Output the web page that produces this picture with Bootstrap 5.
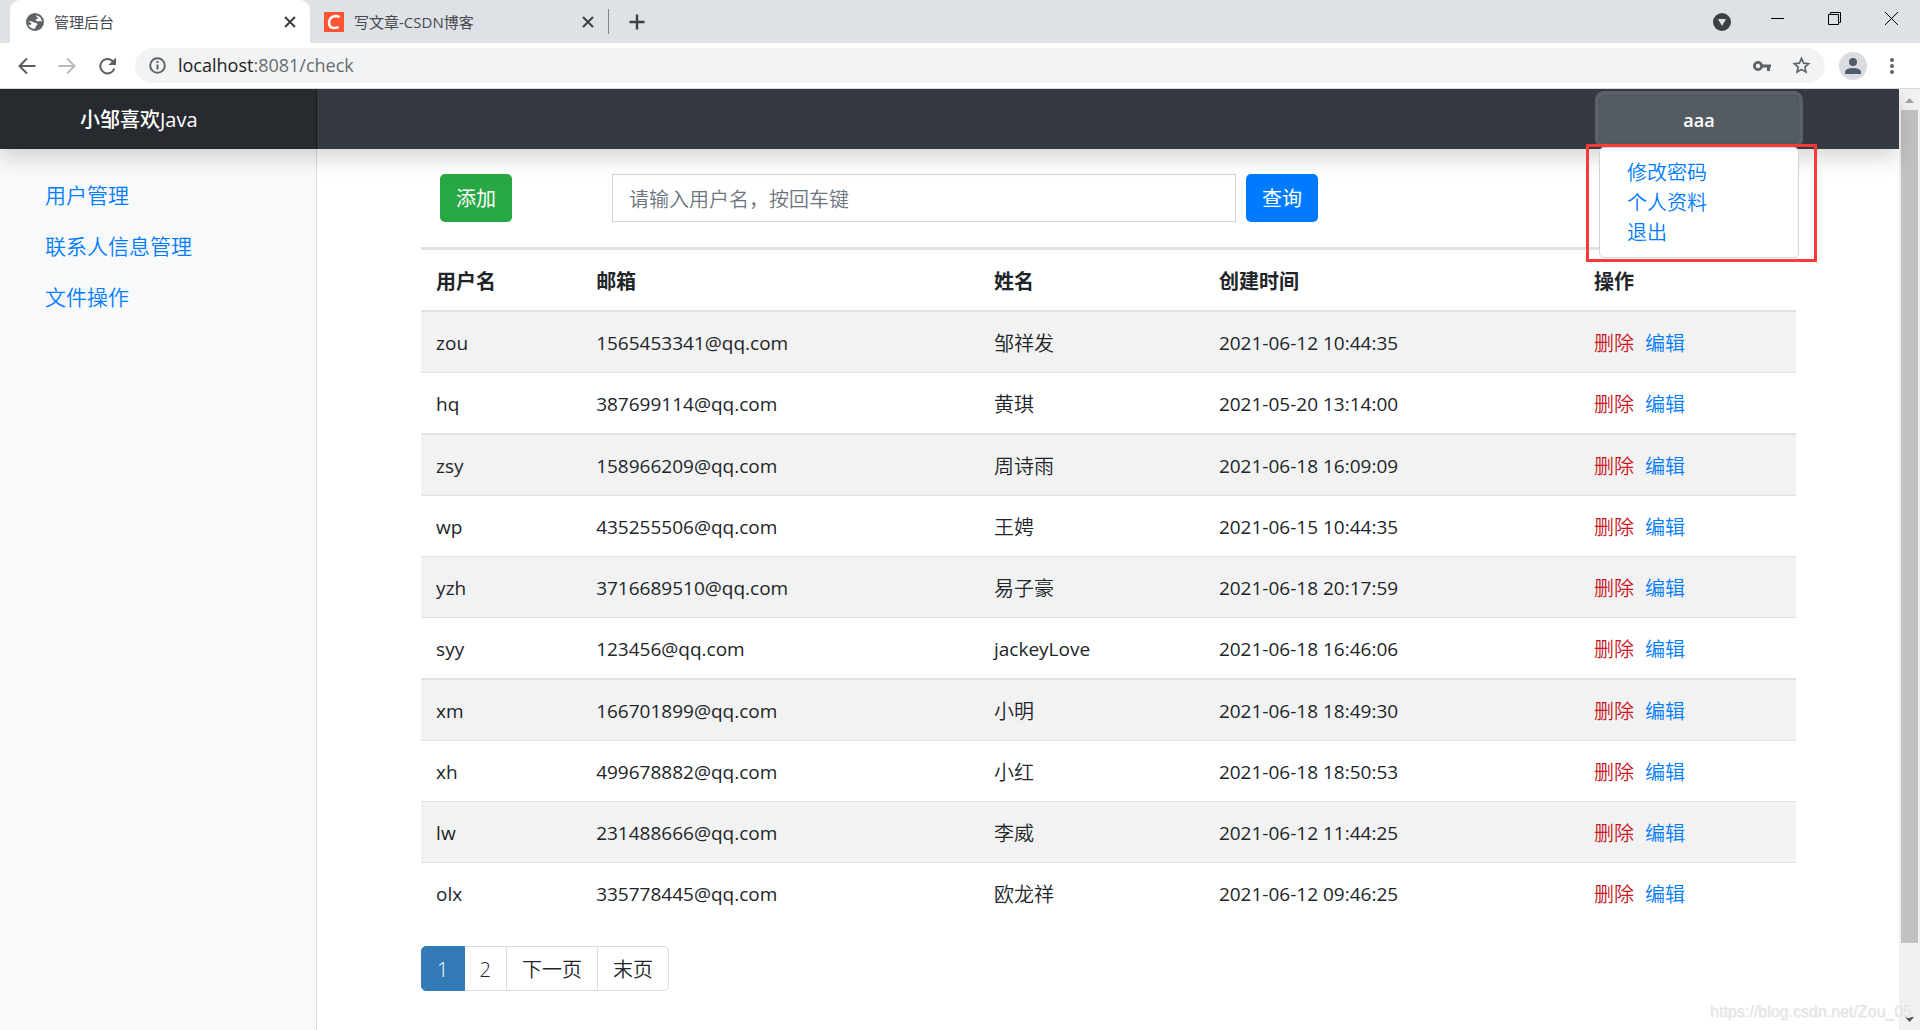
<!DOCTYPE html>
<html lang="zh-CN">
<head>
<meta charset="utf-8">
<meta name="viewport" content="width=device-width, initial-scale=1">
<title>管理后台</title>
<link href="https://cdn.jsdelivr.net/npm/bootstrap@5.3.0/dist/css/bootstrap.min.css" rel="stylesheet">
<style>
:root { --link: #007bff; --line: #dee2e6; }
body { font-family: "Open Sans", "Noto Sans CJK SC", sans-serif; font-size: 20px; line-height: 30px; color: #212529; background: #fff; }
a { color: var(--link); text-decoration: none; }
svg { display: block; flex: none; }
.plain-btn { border: 0; padding: 0; background: none; color: #3c4043; display: flex; align-items: center; justify-content: center; }

/* browser window */
.tab-strip { background: #dee1e6; height: 43px; padding-left: 10px; }
.win-tab { width: 300px; height: 43px; gap: 10px; padding: 0 13px 0 16px; font-size: 15px; line-height: 20px; color: #45494d; }
.win-tab.current { background: #fff; border-radius: 10px 10px 0 0; }
.win-tab.other { width: 298px; padding: 0 13px 0 14px; }
.tab-divider { width: 1px; height: 25px; background: #808488; }
.win-ctl { width: 57px; height: 36px; }
.tab-search { margin-right: 18px; padding-top: 8px; }
.tool-bar { height: 46px; padding: 0 19px 0 17px; border-bottom: 1px solid #d5d7da; }
.address { background: #f1f3f4; height: 35px; border-radius: 18px; padding: 0 14px; margin: 0 14px 0 18px; }
.address-text { font-size: 18px; line-height: 24px; padding-bottom: 2px; color: #202124; }
.address-text span { color: #686c70; }
.key-icon { margin-right: 21px; }
.avatar { width: 28px; height: 28px; margin-right: 12px; border-radius: 50%; background: #dadce0; }

/* admin page */
.page-view { overflow: hidden; }
.side-col { width: 16.7%; flex: none; }
.main-col { width: 83.3%; flex: none; }
.top-bar { background: #353a41; height: 60px; box-shadow: 0 10px 20px rgba(0,0,0,.15); z-index: 2; }
.site-brand { background: rgba(0,0,0,.25); border-right: 1px solid rgba(0,0,0,.35); color: #fff; font-size: 20px; font-weight: 500; padding: 2px 0 0 80px; }
.user-menu { width: 200px; margin-right: 100px; padding-top: 6px; }
.user-btn { height: 49px; background: #545b62; border: 1px solid #4e555b; border-radius: 5px; box-shadow: 0 0 0 4px #5c6169; color: #fff; font-size: 18px; font-weight: 600; }
.user-list { top: 58px; z-index: 3; height: 111px; padding: 10px 27px; background: #fff; border: 1px solid #d3d3d3; border-radius: 5px; font-weight: 350; }
.mark-box { top: 55px; left: -13px; z-index: 4; width: 231px; height: 118px; border: 3px solid #fb3939; pointer-events: none; }
.side-bar { background: #f8f9fa; border-right: 1px solid #d9dadb; padding: 31px 0 0 45px; font-size: 21px; font-weight: 350; }
.side-bar nav { gap: 20px; }
.side-bar a { line-height: 31px; }
.content { padding: 25px 103px 0 104px; }
.tools { padding-left: 19px; margin-bottom: 25px; }
.btn-tool { height: 48px; padding: 2px 16px 0; font-size: 20px; border-radius: 5px; border: 0; color: #fff; }
.btn-tool:hover { color: #fff; }
.btn-add, .btn-add:hover { background: #28a745; margin-right: 100px; }
.btn-find, .btn-find:hover { background: var(--link); margin-left: 10px; }
.find-box { width: 624px; height: 48px; padding: 2px 16px 0; font-size: 20px; font-weight: 350; border: 1px solid #ced4da; border-radius: 0; }
.find-box::placeholder { color: #6c757d; }
.user-table { table-layout: fixed; border-collapse: separate; border-spacing: 0; border-top: 3px solid var(--line); margin: 0; }
.user-table > :not(caption) > * > * { padding: 3px 15px 0; height: 61px; border: 0; border-top: 1px solid var(--line); color: #212529; background: none; box-shadow: none; vertical-align: middle; }
.user-table > thead > tr > th { height: 60px; border-top: 0; }
.user-table > tbody > tr:nth-child(4n+3) > td { border-top-width: 1px; }
.user-table > tbody > tr:nth-child(4n+3) > td,
.user-table > tbody > tr:first-child > td { border-top-width: 2px; height: 62px; }
.user-table > tbody > tr:nth-child(odd) { background: #f2f2f2; }
.user-table > tbody > tr > td { font-weight: 350; }
.user-table > tbody > tr > .latin { font-size: 19px; font-weight: 400; padding-top: 1px; }
.del { color: #c9151b; margin-right: 11px; }
.pages { margin: 23px 0 0; }
.pages .page-link { height: 45px; padding: 8px 15px; font-size: 20px; line-height: 30px; color: #212529; border-color: #ddd; font-weight: 350; }
.pages .active .page-link { background: #337ab7; border-color: #337ab7; color: #fff; }
.pages .page-item:first-child .page-link { border-radius: 5px 0 0 5px; }
.pages .page-item:last-child .page-link { border-radius: 0 5px 5px 0; }
.scroll-rail { width: 21px; background: #f1f1f1; padding: 0 2px; }
.scroll-rail svg { margin: 0 auto; }
.scroll-thumb { background: #c1c1c1; flex: 0 0 88.5%; }
.site-note { right: 8px; bottom: 7px; z-index: 5; font: 16px/22px "Liberation Sans", Arial, sans-serif; color: #e3e3e3; text-shadow: 1px 1px 0 #f4f4f4; }
</style>
</head>
<body class="vh-100 d-flex flex-column overflow-hidden">

<header>
  <div class="tab-strip d-flex align-items-center">
    <div class="win-tab current d-flex align-items-center">
      <svg width="18" height="18" viewBox="0 0 18 18"><circle cx="9" cy="9" r="9" fill="#5f6368"/><path d="M10.500 2.200Q15.500 3.500 16 9l-2-1.200-1.500.7-2-.5L9.500 6.500 12 5.500 11.500 4 10 3.500zM2 8l4 .5 2 1 2.500.5 1 1.500-1.500 1.500-1 2.800Q4 16 2.500 11.500L5 12 5.500 10.500z" fill="#fff"/></svg>
      <span class="flex-grow-1">管理后台</span>
      <button class="plain-btn" aria-label="关闭标签页"><svg width="14" height="14" viewBox="0 0 14 14" stroke="#3c4043" stroke-width="2"><path d="M2 2l10 10M12 2L2 12"/></svg></button>
    </div>
    <div class="win-tab other d-flex align-items-center">
      <svg width="20" height="20" viewBox="0 0 20 20"><path fill="#fc5531" d="M0 0h20v20H0z"/><path d="M15.500 5.200Q14 4 11.500 4 5.500 4.500 5 10.500q0 5.500 5 5.500 3 0 4.500-1" fill="none" stroke="#fff" stroke-width="2.500"/></svg>
      <span class="flex-grow-1">写文章-CSDN博客</span>
      <button class="plain-btn" aria-label="关闭标签页"><svg width="14" height="14" viewBox="0 0 14 14" stroke="#3c4043" stroke-width="2"><path d="M2 2l10 10M12 2L2 12"/></svg></button>
    </div>
    <div class="tab-divider"></div>
    <button class="plain-btn ms-3 ps-1" aria-label="新标签页"><svg width="16" height="16" viewBox="0 0 16 16" stroke="#3c4043" stroke-width="2.400"><path d="M8 .5v15M.5 8h15"/></svg></button>
    <div class="ms-auto d-flex align-self-start align-items-center">
      <button class="plain-btn tab-search" aria-label="搜索标签页"><svg width="18" height="18" viewBox="0 0 18 18"><circle cx="9" cy="9" r="9" fill="#3c4043"/><path d="M5 6h8l-4 7z" fill="#dee1e6"/></svg></button>
      <button class="plain-btn win-ctl" aria-label="最小化"><svg width="13" height="13" viewBox="0 0 13 13"><path d="M0 6.500h13" stroke="#000"/></svg></button>
      <button class="plain-btn win-ctl" aria-label="还原"><svg width="13" height="13" viewBox="0 0 13 13" fill="none" stroke="#000"><path d="M.5 2.500h10v10H.5zM2.500 2.500v-2h10v10h-2"/></svg></button>
      <button class="plain-btn win-ctl" aria-label="关闭"><svg width="13" height="13" viewBox="0 0 13 13"><path d="M0 0l13 13M13 0L0 13" stroke="#000"/></svg></button>
    </div>
  </div>
  <div class="tool-bar d-flex align-items-center">
    <button class="plain-btn" aria-label="后退"><svg width="20" height="20" viewBox="0 0 20 20" fill="none" stroke="#5a5e63" stroke-width="2"><path d="M18.500 10H3M10 2.500L2.500 10l7.500 7.500"/></svg></button>
    <button class="plain-btn ms-3 ps-1" aria-label="前进"><svg width="20" height="20" viewBox="0 0 20 20" fill="none" stroke="#b9bbbe" stroke-width="2"><path d="M1.500 10H17M10 2.500l7.500 7.500-7.500 7.500"/></svg></button>
    <button class="plain-btn ms-3 ps-1" aria-label="刷新"><svg width="20" height="20" viewBox="0 0 20 20" fill="none" stroke="#5a5e63" stroke-width="2"><path d="M17.300 12.500A7.200 7.200 0 1 1 15.500 5l1.500 1.500"/><path d="M19 1.500v7.500h-7.500z" fill="#5a5e63" stroke="none"/></svg></button>
    <div class="address d-flex align-items-center flex-grow-1">
      <svg width="17" height="17" viewBox="0 0 17 17" fill="none" stroke="#5f6368" stroke-width="2"><circle cx="8.500" cy="8.500" r="7.300"/><path d="M8.500 7.500v5M8.500 4v2"/></svg>
      <div class="address-text ms-2 ps-1 flex-grow-1">localhost<span>:8081/check</span></div>
      <svg class="key-icon" width="18" height="12" viewBox="0 0 18 12"><circle cx="5" cy="6" r="3.600" fill="none" stroke="#5f6368" stroke-width="2.800"/><path d="M9 4.500h9v3h-1V11h-3V7.500H9z" fill="#5f6368"/></svg>
      <svg width="19" height="19" viewBox="0 0 20 20" fill="none" stroke="#5f6368" stroke-width="1.700"><path d="M10 2.500l2.200 5 5.400.5-4.100 3.600 1.200 5.400-4.700-2.900-4.700 2.900 1.200-5.400L2.400 8l5.400-.5z"/></svg>
    </div>
    <div class="avatar d-flex align-items-center justify-content-center"><svg width="16" height="16" viewBox="0 0 16 16" fill="#4f5b6e"><circle cx="8" cy="4" r="4"/><path d="M0 16v-2.500Q1 10 8 10t8 3.500V16z"/></svg></div>
    <button class="plain-btn ps-1" aria-label="菜单"><svg width="18" height="18" viewBox="0 0 18 18" fill="#5f6368"><circle cx="9" cy="3" r="2"/><circle cx="9" cy="9" r="2"/><circle cx="9" cy="15" r="2"/></svg></button>
  </div>
</header>

<div class="page-view d-flex flex-grow-1">
  <div class="flex-grow-1 d-flex flex-column">
    <nav class="top-bar d-flex position-relative">
      <div class="site-brand side-col d-flex align-items-center">小邹喜欢Java</div>
      <div class="main-col d-flex justify-content-end">
        <div class="user-menu position-relative">
          <button class="user-btn w-100 p-0">aaa</button>
          <div class="user-list position-absolute w-100 d-flex flex-column">
            <a href="#">修改密码</a>
            <a href="#">个人资料</a>
            <a href="#">退出</a>
          </div>
          <div class="mark-box position-absolute"></div>
        </div>
      </div>
    </nav>
    <div class="d-flex flex-grow-1">
      <aside class="side-bar side-col">
        <nav class="d-flex flex-column align-items-start">
          <a href="#">用户管理</a>
          <a href="#">联系人信息管理</a>
          <a href="#">文件操作</a>
        </nav>
      </aside>
      <main class="content main-col">
        <form class="tools d-flex">
          <button type="button" class="btn btn-tool btn-add">添加</button>
          <input class="find-box" type="text" aria-label="用户名" placeholder="请输入用户名，按回车键">
          <button type="button" class="btn btn-tool btn-find">查询</button>
        </form>
        <table class="table user-table">
          <colgroup><col style="width:11.64%"><col style="width:28.94%"><col style="width:16.36%"><col style="width:27.28%"><col></colgroup>
          <thead><tr><th>用户名</th><th>邮箱</th><th>姓名</th><th>创建时间</th><th>操作</th></tr></thead>
          <tbody>
            <tr><td class="latin">zou</td><td class="latin">1565453341@qq.com</td><td>邹祥发</td><td class="latin">2021-06-12 10:44:35</td><td><a class="del" href="#">删除</a><a href="#">编辑</a></td></tr>
            <tr><td class="latin">hq</td><td class="latin">387699114@qq.com</td><td>黄琪</td><td class="latin">2021-05-20 13:14:00</td><td><a class="del" href="#">删除</a><a href="#">编辑</a></td></tr>
            <tr><td class="latin">zsy</td><td class="latin">158966209@qq.com</td><td>周诗雨</td><td class="latin">2021-06-18 16:09:09</td><td><a class="del" href="#">删除</a><a href="#">编辑</a></td></tr>
            <tr><td class="latin">wp</td><td class="latin">435255506@qq.com</td><td>王娉</td><td class="latin">2021-06-15 10:44:35</td><td><a class="del" href="#">删除</a><a href="#">编辑</a></td></tr>
            <tr><td class="latin">yzh</td><td class="latin">3716689510@qq.com</td><td>易子豪</td><td class="latin">2021-06-18 20:17:59</td><td><a class="del" href="#">删除</a><a href="#">编辑</a></td></tr>
            <tr><td class="latin">syy</td><td class="latin">123456@qq.com</td><td class="latin">jackeyLove</td><td class="latin">2021-06-18 16:46:06</td><td><a class="del" href="#">删除</a><a href="#">编辑</a></td></tr>
            <tr><td class="latin">xm</td><td class="latin">166701899@qq.com</td><td>小明</td><td class="latin">2021-06-18 18:49:30</td><td><a class="del" href="#">删除</a><a href="#">编辑</a></td></tr>
            <tr><td class="latin">xh</td><td class="latin">499678882@qq.com</td><td>小红</td><td class="latin">2021-06-18 18:50:53</td><td><a class="del" href="#">删除</a><a href="#">编辑</a></td></tr>
            <tr><td class="latin">lw</td><td class="latin">231488666@qq.com</td><td>李威</td><td class="latin">2021-06-12 11:44:25</td><td><a class="del" href="#">删除</a><a href="#">编辑</a></td></tr>
            <tr><td class="latin">olx</td><td class="latin">335778445@qq.com</td><td>欧龙祥</td><td class="latin">2021-06-12 09:46:25</td><td><a class="del" href="#">删除</a><a href="#">编辑</a></td></tr>
          </tbody>
        </table>
        <ul class="pagination pages">
          <li class="page-item active"><a class="page-link" href="#">1</a></li>
          <li class="page-item"><a class="page-link" href="#">2</a></li>
          <li class="page-item"><a class="page-link" href="#">下一页</a></li>
          <li class="page-item"><a class="page-link" href="#">末页</a></li>
        </ul>
      </main>
    </div>
  </div>
  <div class="scroll-rail d-flex flex-column flex-shrink-0">
    <svg width="17" height="21" viewBox="0 0 17 21"><path d="M4 14l4.500-5 4.500 5z" fill="#a3a3a3"/></svg>
    <div class="scroll-thumb"></div>
    <svg class="mt-auto" width="17" height="21" viewBox="0 0 17 21"><path d="M4 8l4.500 5L13 8z" fill="#505050"/></svg>
  </div>
</div>
<div class="site-note position-absolute">https://blog.csdn.net/Zou_05</div>
<script src="https://cdn.jsdelivr.net/npm/bootstrap@5.3.0/dist/js/bootstrap.bundle.min.js"></script>
</body>
</html>
